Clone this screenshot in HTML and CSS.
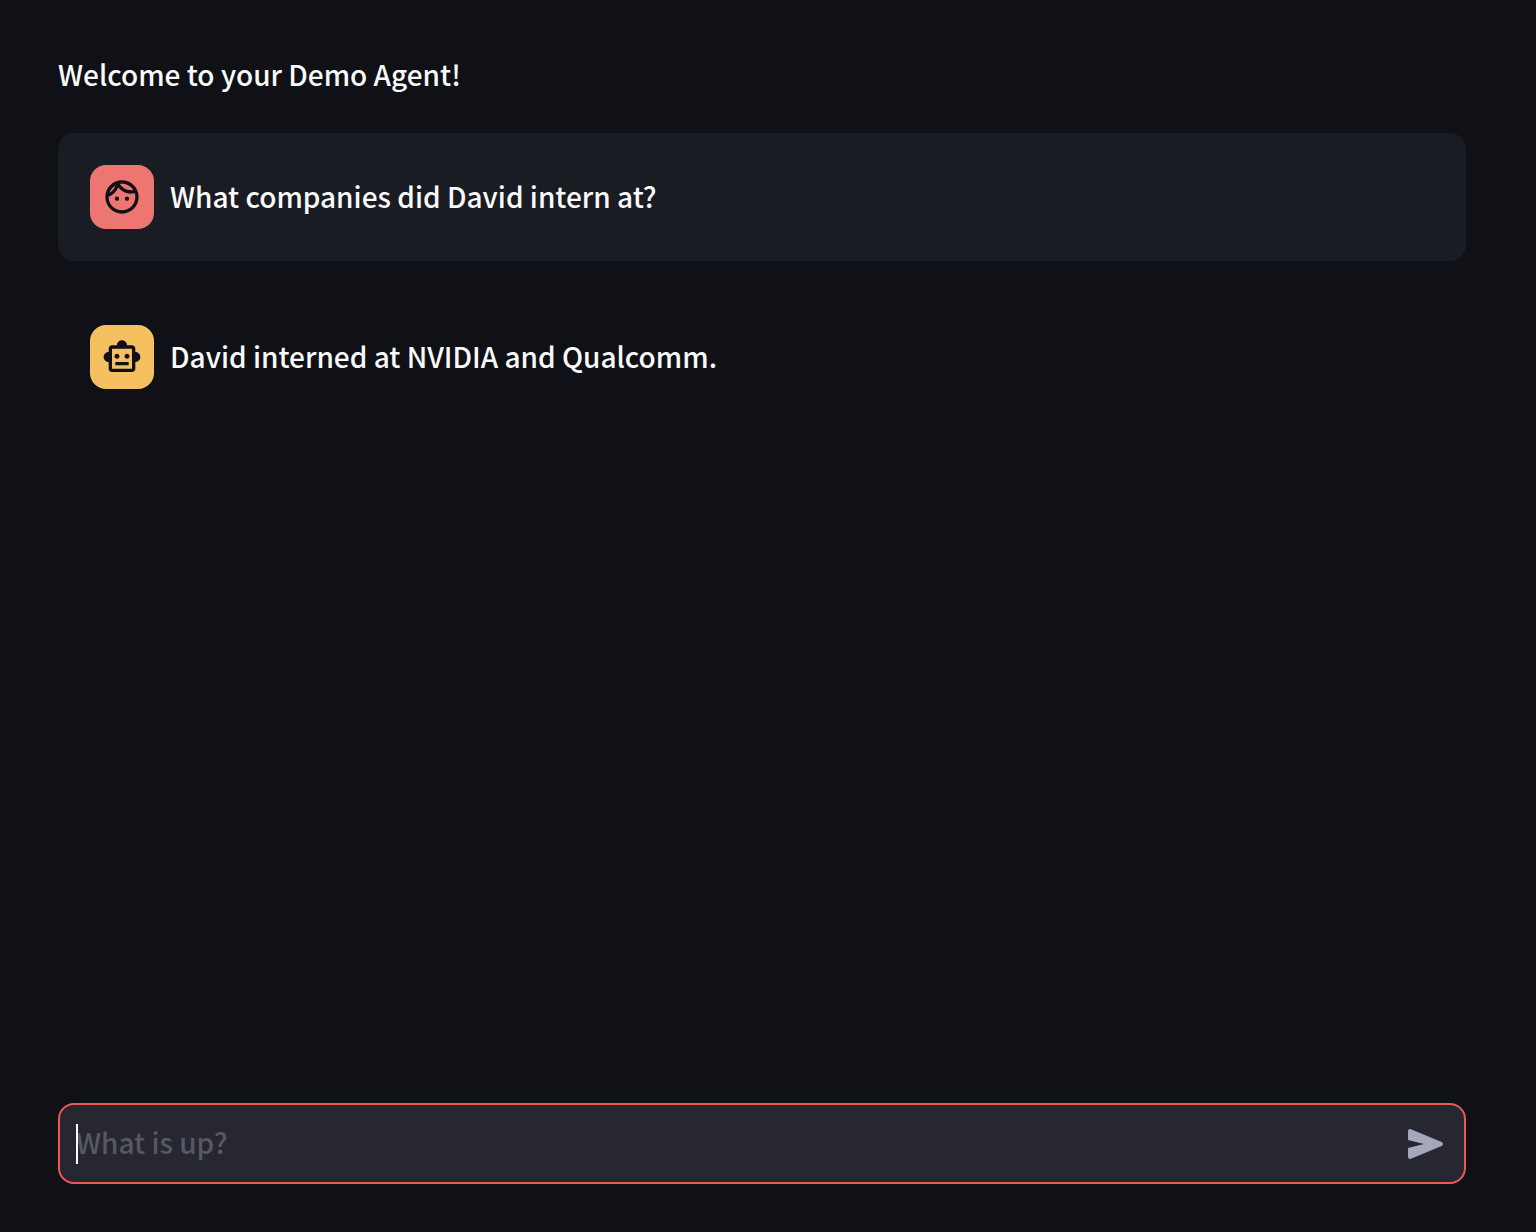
FILE: index.html
```html
<!DOCTYPE html>
<html lang="en">
<head>
<meta charset="utf-8">
<meta name="viewport" content="width=device-width, initial-scale=1">
<title>Demo Agent</title>
<link rel="stylesheet" href="styles.css">
</head>
<body>
<div class="app">
  <main class="chat">
    <p class="welcome">Welcome to your Demo Agent!</p>
    <article class="message message-user">
      <div class="avatar avatar-user">
        <svg class="icon" viewBox="0 0 24 24" aria-hidden="true"><path d="M10.25 13c0 .69-.56 1.25-1.25 1.25S7.75 13.69 7.75 13s.56-1.25 1.25-1.25 1.25.56 1.25 1.25zM15 11.75c-.69 0-1.25.56-1.25 1.25s.56 1.25 1.25 1.25 1.25-.56 1.25-1.25-.56-1.25-1.25-1.25zm7 .25c0 5.52-4.48 10-10 10S2 17.52 2 12 6.48 2 12 2s10 4.48 10 10zM10.66 4.12C12.06 6.44 14.6 8 17.5 8c.46 0 .91-.05 1.34-.12C17.44 5.56 14.9 4 12 4c-.46 0-.91.05-1.34.12zM4.42 9.47c1.71-.97 3.03-2.55 3.66-4.44C6.37 6 5.05 7.58 4.42 9.47zM20 12c0-.78-.12-1.53-.33-2.24-.7.15-1.42.24-2.17.24-3.13 0-5.92-1.44-7.76-3.69C8.69 8.87 6.6 10.88 4 11.86c.01.04 0 .09 0 .14 0 4.42 3.58 8 8 8s8-3.58 8-8z"/></svg>
      </div>
      <p class="message-text">What companies did David intern at?</p>
    </article>
    <article class="message">
      <div class="avatar avatar-bot">
        <svg class="icon" viewBox="0 0 24 24" aria-hidden="true"><path d="M20 9V7c0-1.1-.9-2-2-2h-3c0-1.66-1.34-3-3-3S9 3.34 9 5H6c-1.1 0-2 .9-2 2v2c-1.66 0-3 1.34-3 3s1.34 3 3 3v4c0 1.1.9 2 2 2h12c1.1 0 2-.9 2-2v-4c1.66 0 3-1.34 3-3s-1.34-3-3-3zm-2 10H6V7h12v12zm-9-6c-.83 0-1.5-.67-1.5-1.5S8.17 10 9 10s1.5.67 1.5 1.5S9.83 13 9 13zm7.5-1.5c0 .83-.67 1.5-1.5 1.5s-1.5-.67-1.5-1.5.67-1.5 1.5-1.5 1.5.67 1.5 1.5zM8 15h8v2H8v-2z"/></svg>
      </div>
      <p class="message-text">David interned at NVIDIA and Qualcomm.</p>
    </article>
  </main>
  <form class="composer">
    <input class="composer-input" type="text" placeholder="What is up?" aria-label="Message">
    <span class="caret" aria-hidden="true"></span>
    <button class="send" type="button" aria-label="Send message">
      <svg class="icon" viewBox="0 0 40 40" aria-hidden="true"><path d="M3 7.2C3 5.5 4.5 4.6 6 5.2L36.6 18Q38 18.6 38 20T36.6 22L6 34.8C4.5 35.4 3 34.5 3 32.8V24L19 20L3 16Z"/></svg>
    </button>
  </form>
</div>
</body>
</html>
```
FILE: styles.css
```css
* {
  box-sizing: border-box;
}

body {
  margin: 0;
  background: #0f1116;
  color: #fafafa;
  font-family: "Noto Sans CJK SC", "Noto Sans", sans-serif;
  font-size: 28px;
  font-weight: 500;
  line-height: 48px;
}

p {
  margin: 0;
}

.app {
  display: flex;
  flex-direction: column;
  gap: 32px;
  min-height: 100vh;
  padding: 50px 70px 48px 58px;
}

.chat {
  flex: 1;
  display: flex;
  flex-direction: column;
  gap: 32px;
}

.welcome {
  padding-bottom: 3px;
}

.message {
  display: flex;
  align-items: center;
  gap: 16px;
  padding: 32px;
  border-radius: 16px;
}

.message-user {
  background: #1a1c23;
}

.message-text {
  padding-bottom: 2px;
}

.avatar {
  flex: none;
  display: grid;
  place-items: center;
  width: 64px;
  height: 64px;
  border-radius: 16px;
  color: #0f1116;
}

.avatar-user {
  background: #ed7672;
}

.avatar-bot {
  background: #f5c05f;
}

.icon {
  display: block;
  width: 40px;
  height: 40px;
  fill: currentColor;
}

.composer {
  position: relative;
  display: flex;
  align-items: center;
  height: 81px;
  padding: 0 19px 0 16px;
  border: 2px solid #ed5a53;
  border-radius: 16px;
  background: #262730;
}

.composer-input {
  flex: 1;
  min-width: 0;
  height: 48px;
  padding: 0 0 4px;
  border: 0;
  outline: 0;
  background: transparent;
  color: inherit;
  font: inherit;
}

.composer-input::placeholder {
  color: #575864;
  opacity: 1;
}

.caret {
  position: absolute;
  left: 16px;
  top: 19px;
  width: 2px;
  height: 40px;
  background: #fafafa;
}

.send {
  flex: none;
  padding: 0;
  border: 0;
  background: transparent;
  color: #a5a8b8;
}
```
